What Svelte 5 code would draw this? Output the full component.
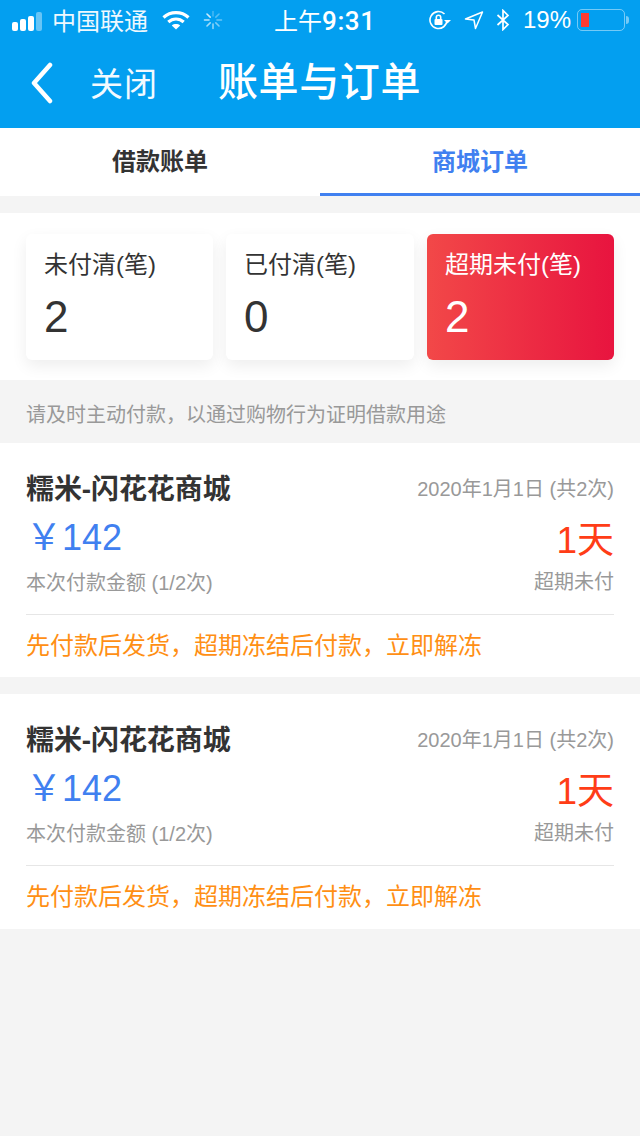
<script>
	const stats = [
		{ label: '未付清(笔)', value: 2 },
		{ label: '已付清(笔)', value: 0 },
		{ label: '超期未付(笔)', value: 2, overdue: true }
	];
	const orders = [1, 2];
	const spokes = [0, 45, 90, 135, 180, 225, 270, 315];
</script>

<div class="page">
	<header class="top">
		<div class="status">
			<div class="signal"><i></i><i></i><i></i><i class="off"></i></div>
			<span class="carrier">中国联通</span>
			<svg class="wifi" viewBox="0 0 28 20" width="28" height="20" fill="none" stroke="#fff" stroke-width="3.2">
				<path d="M1.5 7.5C8.5 1 19.5 1 26.5 7.5" />
				<path d="M6.3 12C10.8 8 17.2 8 21.7 12" />
				<path d="M14 19.5 9.8 15.4C12 13.5 16 13.5 18.2 15.4Z" fill="#fff" stroke="none" />
			</svg>
			<svg class="spin" viewBox="0 0 20 20" width="20" height="20" stroke="#fff" stroke-width="1.6" stroke-linecap="round">
				{#each spokes as a, i}
					<line x1="10" y1="1.5" x2="10" y2="6" transform="rotate({a} 10 10)" opacity={0.3 + i * 0.09} />
				{/each}
			</svg>
			<span class="clock">上午<b>9:31</b></span>
			<div class="right">
				<svg viewBox="0 0 24 20" width="24" height="20" fill="none" stroke="#fff" stroke-width="1.6">
					<path d="M19 10a8.500 8.500 0 1 1-2.500-6" />
					<path d="M16 10h7l-3.500 3.500Z" fill="#fff" stroke="none" />
					<rect x="6.500" y="9" width="8" height="6" rx="1" fill="#fff" stroke="none" />
					<path d="M8.300 9V7.500a2.200 2.200 0 0 1 4.400 0V9" />
				</svg>
				<svg class="loc" viewBox="0 0 20 20" width="20" height="20" fill="none" stroke="#fff" stroke-width="1.5" stroke-linejoin="round">
					<path d="M1.500 9 18.500 2 11.500 18.500 10 10Z" />
				</svg>
				<svg class="bt" viewBox="0 0 14 22" width="14" height="22" fill="none" stroke="#fff" stroke-width="1.7">
					<path d="M1.500 6 12 15.500 7 20.500V1.500L12 6.500 1.500 16" />
				</svg>
				<span class="pct">19%</span>
				<div class="battery"><div class="cell"><b></b></div><u></u></div>
			</div>
		</div>
		<nav class="bar">
			<svg class="back" viewBox="0 0 22 42" width="22" height="42" fill="none" stroke="#fff" stroke-width="4.500" stroke-linecap="round" stroke-linejoin="round">
				<path d="M19 3 3 21 19 39" />
			</svg>
			<span class="close">关闭</span>
			<h1>账单与订单</h1>
		</nav>
	</header>

	<div class="tabs">
		<div class="tab">借款账单</div>
		<div class="tab on">商城订单</div>
	</div>

	<section class="stats">
		{#each stats as s}
			<div class="stat" class:overdue={s.overdue}>
				<div class="lbl">{s.label}</div>
				<div class="num">{s.value}</div>
			</div>
		{/each}
	</section>

	<p class="note">请及时主动付款，以通过购物行为证明借款用途</p>

	{#each orders as o (o)}
		<article class="order">
			<div class="row r1">
				<span class="shop">糯米-闪花花商城</span>
				<span class="date">2020年1月1日 (共2次)</span>
			</div>
			<div class="row r2">
				<div>
					<div class="amount"><span class="yen">￥</span>142</div>
					<div class="sub">本次付款金额 (1/2次)</div>
				</div>
				<div class="late">
					<div class="days">1天</div>
					<div class="sub">超期未付</div>
				</div>
			</div>
			<div class="warn">先付款后发货，超期冻结后付款，立即解冻</div>
		</article>
	{/each}
</div>

<style>
	:global(body) {
		margin: 0;
		background: #f4f4f4;
	}
	.page {
		height: 1136px;
		overflow: hidden;
		background: #f4f4f4;
		font-family: "Liberation Sans", "Noto Sans CJK SC", sans-serif;
		color: #333;
	}
	.top {
		height: 128px;
		background: #039ff0;
		color: #fff;
	}
	.status {
		height: 40px;
		display: flex;
		align-items: center;
		padding: 0 11px 0 12px;
		font-size: 24px;
	}
	.signal {
		display: flex;
		align-items: flex-end;
		gap: 2px;
		height: 20px;
		padding-top: 1px;
	}
	.signal i {
		width: 6px;
		border-radius: 2px;
		background: #fff;
		height: 9px;
	}
	.signal i:nth-child(2) { height: 12px; }
	.signal i:nth-child(3) { height: 15px; }
	.signal i:nth-child(4) { height: 19px; }
	.signal i.off { background: rgba(255, 255, 255, 0.4); }
	.carrier {
		margin-left: 10px;
		font-size: 24px;
		width: 97px;
		color: #eef8fe;
		position: relative;
		top: -1px;
	}
	.wifi { margin-left: 13px; }
	.spin { margin-left: 13px; opacity: 0.85; }
	.clock {
		margin-left: 51px;
		position: relative;
		top: -1px;
	}
	.clock b {
		font-family: Roboto, sans-serif;
		font-weight: 500;
		font-size: 26px;
		letter-spacing: 0.6px;
	}
	.right {
		margin-left: auto;
		display: flex;
		align-items: center;
	}
	.loc { margin-left: 12px; }
	.bt { margin-left: 12px; }
	.pct { margin-left: 13px; }
	.battery {
		margin-left: 6px;
		display: flex;
		align-items: center;
	}
	.cell {
		box-sizing: border-box;
		width: 48px;
		height: 22px;
		border: 1.5px solid rgba(255, 255, 255, 0.45);
		border-radius: 5px;
		padding: 2.500px 2.500px;
	}
	.cell b {
		display: block;
		width: 8px;
		height: 14px;
		background: #ff3b30;
	}
	.battery u {
		width: 3px;
		height: 8px;
		margin-left: 1px;
		border-radius: 0 3px 3px 0;
		background: rgba(255, 255, 255, 0.45);
	}
	.bar {
		height: 88px;
		display: flex;
		align-items: center;
		padding-left: 31px;
	}
	.back { margin-top: -2px; }
	.close {
		margin: 0 0 4px 37px;
		font-size: 33px;
		letter-spacing: 1px;
		color: #f2faff;
	}
	h1 {
		margin: 0 0 10px 60px;
		font-size: 40px;
		font-weight: 500;
		letter-spacing: 0.6px;
	}
	.tabs {
		display: flex;
		height: 68px;
		background: #fff;
	}
	.tab {
		flex: 1;
		text-align: center;
		line-height: 67px;
		font-size: 24px;
		font-weight: 700;
		color: #333;
	}
	.tab.on {
		box-sizing: border-box;
		color: #4080f0;
		border-bottom: 3px solid #4080f0;
	}
	.stats {
		margin-top: 17px;
		height: 167px;
		box-sizing: border-box;
		background: #fff;
		padding: 21px 26px 20px;
		display: grid;
		grid-template-columns: 187px 188px 187px;
		column-gap: 13px;
	}
	.stat {
		border-radius: 6px;
		background: #fff;
		box-shadow: 0 6px 16px rgba(0, 0, 0, 0.07);
		padding: 14px 18px;
	}
	.stat.overdue {
		background: linear-gradient(90deg, #f24848, #e8143f);
		color: #fff;
	}
	.lbl {
		font-size: 24px;
		line-height: 34px;
	}
	.num {
		margin-top: 10px;
		font-size: 44px;
		line-height: 50px;
	}
	.note {
		margin: 0;
		height: 63px;
		box-sizing: border-box;
		padding: 20px 26px 0;
		font-size: 20px;
		line-height: 30px;
		color: #999;
	}
	.order {
		background: #fff;
		height: 234px;
		box-sizing: border-box;
		padding: 26px 26px 0;
		margin-bottom: 17px;
	}
	.order:last-child { height: 235px; }
	.row {
		display: flex;
		justify-content: space-between;
	}
	.r1 {
		align-items: center;
		height: 36px;
	}
	.shop {
		font-size: 28px;
		font-weight: 700;
		letter-spacing: -0.1px;
		color: #333;
	}
	.date {
		font-size: 20px;
		color: #999;
	}
	.r2 {
		height: 110px;
		border-bottom: 1px solid #e6e6e6;
		box-sizing: border-box;
		padding-top: 10px;
	}
	.amount {
		font-size: 36px;
		line-height: 46px;
		color: #4080f0;
		display: flex;
		align-items: center;
	}
	.yen { font-size: 36px; }
	.sub {
		margin-top: 7px;
		font-size: 20px;
		line-height: 30px;
		color: #999;
	}
	.late { text-align: right; }
	.days {
		margin-top: 3px;
		font-size: 37px;
		line-height: 46px;
		color: #ff3d17;
	}
	.late .sub { margin-top: 3px; }
	.warn {
		margin-top: 14px;
		font-size: 24px;
		line-height: 34px;
		color: #ff8f14;
	}
</style>
